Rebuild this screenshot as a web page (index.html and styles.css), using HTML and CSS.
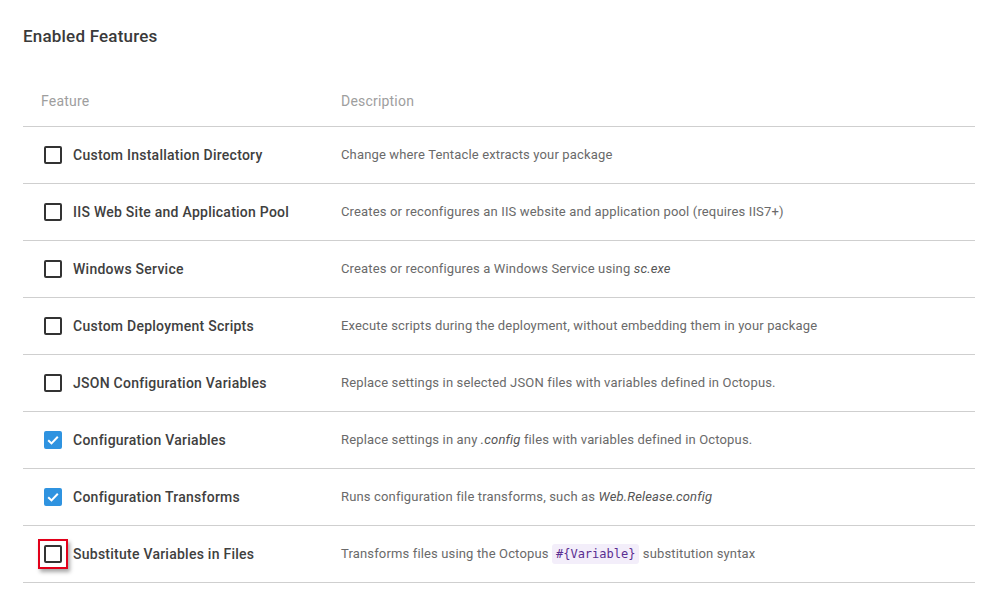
FILE: index.html
```html
<!DOCTYPE html>
<html>
<head>
<meta charset="utf-8">
<link rel="stylesheet" href="styles.css">
</head>
<body>
<div class="page">
  <h2 class="title">Enabled Features</h2>
  <table class="features">
    <thead>
      <tr><th class="col-feature">Feature</th><th>Description</th></tr>
    </thead>
    <tbody>
      <tr><td><div class="feat"><span class="cb"></span>Custom Installation Directory</div></td><td class="desc">Change where Tentacle extracts your package</td></tr>
      <tr><td><div class="feat"><span class="cb"></span>IIS Web Site and Application Pool</div></td><td class="desc">Creates or reconfigures an IIS website and application pool (requires IIS7+)</td></tr>
      <tr><td><div class="feat"><span class="cb"></span>Windows Service</div></td><td class="desc">Creates or reconfigures a Windows Service using <em>sc.exe</em></td></tr>
      <tr><td><div class="feat"><span class="cb"></span>Custom Deployment Scripts</div></td><td class="desc">Execute scripts during the deployment, without embedding them in your package</td></tr>
      <tr><td><div class="feat"><span class="cb"></span>JSON Configuration Variables</div></td><td class="desc">Replace settings in selected JSON files with variables defined in Octopus.</td></tr>
      <tr><td><div class="feat"><span class="cb checked"><svg viewBox="0 0 18 18" width="18" height="18"><path d="M4.2 9.2 L7.5 12.4 L13.8 5.8" fill="none" stroke="#fff" stroke-width="2"/></svg></span>Configuration Variables</div></td><td class="desc">Replace settings in any <em>.config</em> files with variables defined in Octopus.</td></tr>
      <tr><td><div class="feat"><span class="cb checked"><svg viewBox="0 0 18 18" width="18" height="18"><path d="M4.2 9.2 L7.5 12.4 L13.8 5.8" fill="none" stroke="#fff" stroke-width="2"/></svg></span>Configuration Transforms</div></td><td class="desc">Runs configuration file transforms, such as <em>Web.Release.config</em></td></tr>
      <tr><td><div class="feat"><span class="hl"><span class="cb"></span></span>Substitute Variables in Files</div></td><td class="desc">Transforms files using the Octopus <code>#{Variable}</code> substitution syntax</td></tr>
    </tbody>
  </table>
</div>
</body>
</html>
```
FILE: styles.css
```css
html, body { margin: 0; padding: 0; background: #fff; }
body { font-family: Roboto, "Liberation Sans", sans-serif; color: #333; }
.page { padding: 0 11px 0 23px; }
.title {
  margin: 0;
  padding-top: 26px;
  height: 50px;
  font-size: 17px;
  font-weight: 500;
  letter-spacing: 0.2px;
  color: #3a3a3a;
  line-height: 20px;
  box-sizing: border-box;
}
.features { width: 100%; border-collapse: collapse; margin-top: 26px; }
.features th {
  text-align: left;
  font-weight: 400;
  font-size: 14px;
  letter-spacing: 0.2px;
  color: #9e9e9e;
  height: 49px;
  padding: 0 18px 1px;
  border-bottom: 1px solid #cfcfcf;
  vertical-align: middle;
}
.features th.col-feature { width: 264px; }
.features td {
  height: 55px;
  padding: 0 18px 1px;
  border-bottom: 1px solid #cfcfcf;
  vertical-align: middle;
}
.feat {
  display: flex;
  align-items: center;
  gap: 11px;
  font-size: 14px;
  font-weight: 500;
  letter-spacing: 0.25px;
  color: #404040;
  padding-left: 3px;
}
.cb {
  width: 18px;
  height: 18px;
  box-sizing: border-box;
  border: 2px solid #333;
  border-radius: 2px;
  display: inline-block;
  flex: none;
  position: relative;
}
.cb.checked { background: #2f93e0; border-color: #2f93e0; }
.cb svg { position: absolute; left: -2px; top: -2px; }
.hl {
  display: inline-flex;
  flex: none;
  padding: 4px;
  margin: -6px;
  border: 2px solid #e2001a;
  box-shadow: 2px 3px 4px rgba(0,0,0,0.35);
  background: #fff;
}
.desc { font-size: 13px; letter-spacing: 0.15px; color: #6a6a6a; }
.desc em { color: #555; }
.desc code {
  font-family: "DejaVu Sans Mono", "Liberation Mono", monospace;
  font-size: 12px;
  letter-spacing: 0;
  color: #5a2d91;
  background: #f3eefa;
  padding: 3px 4px;
  border-radius: 3px;
}
```
